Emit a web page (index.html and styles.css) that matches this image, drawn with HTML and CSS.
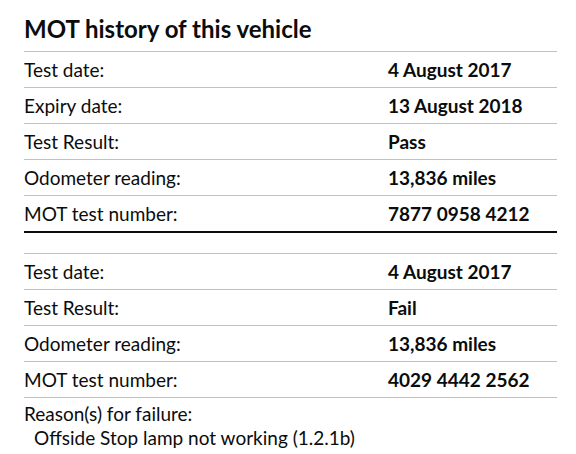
FILE: index.html
```html
<!DOCTYPE html>
<html lang="en">
<head>
<meta charset="utf-8">
<title>MOT history</title>
<link rel="stylesheet" href="styles.css">
</head>
<body>
<main class="mot">
  <h2 class="mot-title">MOT history of this vehicle</h2>
  <dl class="mot-table mot-table--pass">
    <div class="mot-row"><dt>Test date:</dt><dd>4 August 2017</dd></div>
    <div class="mot-row"><dt>Expiry date:</dt><dd>13 August 2018</dd></div>
    <div class="mot-row"><dt>Test Result:</dt><dd>Pass</dd></div>
    <div class="mot-row"><dt>Odometer reading:</dt><dd>13,836 miles</dd></div>
    <div class="mot-row"><dt>MOT test number:</dt><dd>7877 0958 4212</dd></div>
  </dl>
  <dl class="mot-table mot-table--fail">
    <div class="mot-row"><dt>Test date:</dt><dd>4 August 2017</dd></div>
    <div class="mot-row"><dt>Test Result:</dt><dd>Fail</dd></div>
    <div class="mot-row"><dt>Odometer reading:</dt><dd>13,836 miles</dd></div>
    <div class="mot-row"><dt>MOT test number:</dt><dd>4029 4442 2562</dd></div>
  </dl>
  <div class="mot-reasons">
    <p class="mot-reasons-title">Reason(s) for failure:</p>
    <p class="mot-reason">Offside Stop lamp not working (1.2.1b)</p>
  </div>
</main>
</body>
</html>
```
FILE: styles.css
```css
html, body {
  margin: 0;
  padding: 0;
  background: #ffffff;
}
body {
  font-family: Lato, "Liberation Sans", sans-serif;
  color: #0b0c0c;
}
.mot {
  width: 533px;
  margin-left: 24px;
  padding-top: 13px;
}
.mot-title {
  margin: 0;
  font-size: 24px;
  font-weight: 700;
  line-height: 32px;
  height: 39px;
  border-bottom: 1px solid #bfc1c3;
  box-sizing: border-box;
}
.mot-table {
  margin: 0;
  padding: 0;
}
.mot-table--pass {
  border-bottom: 2px solid #0b0c0c;
}
.mot-table--fail {
  margin-top: 20px;
  border-top: 1px solid #bfc1c3;
}
.mot-row {
  display: grid;
  grid-template-columns: 364px 1fr;
  height: 36px;
  align-items: center;
  border-bottom: 1px solid #bfc1c3;
  box-sizing: border-box;
  font-size: 19px;
}
.mot-table--pass .mot-row:last-child {
  border-bottom: none;
  height: 35px;
}
.mot-row dt {
  margin: 0;
}
.mot-row dd {
  margin: 0;
  font-weight: 700;
}
.mot-reasons {
  font-size: 19px;
  padding-top: 4px;
}
.mot-reasons p {
  margin: 0;
  line-height: 24px;
}
.mot-reason {
  padding-left: 10px;
}
```
